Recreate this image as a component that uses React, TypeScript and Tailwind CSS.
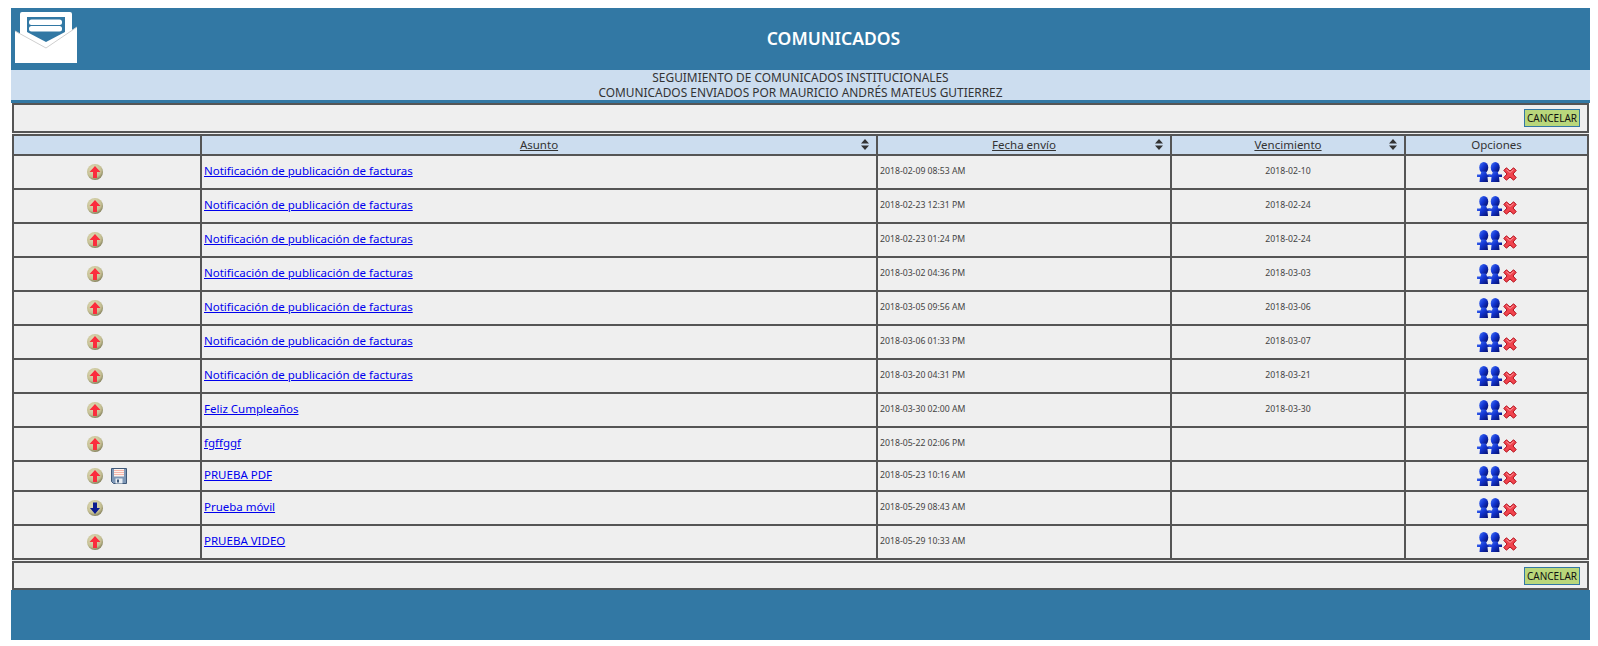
import React from "react";

const Orb = ({ down = false }: { down?: boolean }) => (
  <svg width="16" height="16" viewBox="0 0 16 16" className="block">
    <defs>
      <radialGradient id={down ? "orbd" : "orbu"} cx="0.42" cy="0.35" r="0.72">
        <stop offset="0" stopColor="#e6e2bf" />
        <stop offset="0.65" stopColor="#c4bf93" />
        <stop offset="1" stopColor="#6f6b48" />
      </radialGradient>
    </defs>
    <circle cx="8" cy="8" r="8" fill={`url(#${down ? "orbd" : "orbu"})`} />
    {down ? (
      <path d="M6 2.500h4V8h3L8 14 3 8h3z" fill="#0a1a90" />
    ) : (
      <path d="M8 2l5.500 6H10v6H6V8H2.500z" fill="#fb2d3d" />
    )}
  </svg>
);

const Floppy = () => (
  <svg width="16" height="16" viewBox="0 0 16 16" className="block">
    <path d="M0.500 0.500h15v15h-13l-2-2z" fill="#7e97b6" stroke="#3f5878" />
    <rect x="3" y="1" width="10" height="7.500" fill="#fdf2ec" />
    <path d="M3 2.500h10M3 4.500h10M3 6.500h10" stroke="#f6b6ab" strokeWidth="1" />
    <rect x="4.500" y="10.500" width="7" height="5" fill="#e8edf3" />
    <rect x="6" y="11.500" width="2" height="3" fill="#3f5878" />
  </svg>
);

const Person = ({ x, id }: { x: number; id: string }) => (
  <g transform={`translate(${x} 0)`}>
    <ellipse cx="6.750" cy="5.500" rx="4.500" ry="5.500" fill={`url(#${id})`} />
    <path
      d="M4.500 9.500h4.500l1 3h3.500v2.500h-3l.5 5H2.500l.5-5H0v-2.500h3.500z"
      fill={`url(#${id})`}
    />
  </g>
);

const Users = ({ id }: { id: string }) => (
  <svg width="25" height="20" viewBox="0 0 25 20" className="block">
    <defs>
      <linearGradient id={id} x1="0" y1="0" x2="0.9" y2="0.8">
        <stop offset="0" stopColor="#4a78f5" />
        <stop offset="0.5" stopColor="#1438d6" />
        <stop offset="1" stopColor="#07147a" />
      </linearGradient>
    </defs>
    <Person x={0} id={id} />
    <Person x={11.5} id={id} />
  </svg>
);

const RedX = () => (
  <svg width="14" height="14" viewBox="0 0 14 14" className="block translate-y-[2px] ml-px">
    <path
      d="M3.400.8L7 4 10.600.8 13.200 3.400 10 7l3.200 3.600-2.600 2.600L7 10l-3.600 3.200L.8 10.600 4 7 .8 3.400z"
      fill="#f0444e"
      stroke="#b3101b"
      strokeWidth="1"
    />
    <path d="M3.500 2.500L7 5.500l3.500-3" fill="none" stroke="#fa9a9f" strokeWidth="1" />
  </svg>
);

const Sort = () => (
  <svg width="8" height="11" viewBox="0 0 8 11" className="block">
    <path d="M4 0l4 4.500H0zM4 11L0 6.500h8z" fill="#333" />
  </svg>
);

const Envelope = () => (
  <svg width="62" height="51" viewBox="0 0 62 51" className="block">
    <path d="M5 2a2 2 0 012-2h48a2 2 0 012 2v16l5-3V51H0V19l5 3z" fill="#fff" />
    <path d="M0 19L31 36 62 15" fill="none" stroke="#cfcfcf" strokeWidth="1" />
    <path d="M12 5H50V20L31 30 12 20z" fill="#3278a4" />
    <rect x="14" y="7.500" width="33" height="5.500" rx="2.500" fill="#fff" />
    <rect x="14" y="14" width="33" height="5.500" rx="2.500" fill="#fff" />
  </svg>
);

type Row = { subject: string; sent: string; due: string; h: string; floppy?: boolean; down?: boolean };

const n = "Notificación de publicación de facturas";
const rows: Row[] = [
  { subject: n, sent: "2018-02-09 08:53 AM", due: "2018-02-10", h: "h-[34px]" },
  { subject: n, sent: "2018-02-23 12:31 PM", due: "2018-02-24", h: "h-[34px]" },
  { subject: n, sent: "2018-02-23 01:24 PM", due: "2018-02-24", h: "h-[34px]" },
  { subject: n, sent: "2018-03-02 04:36 PM", due: "2018-03-03", h: "h-[34px]" },
  { subject: n, sent: "2018-03-05 09:56 AM", due: "2018-03-06", h: "h-[34px]" },
  { subject: n, sent: "2018-03-06 01:33 PM", due: "2018-03-07", h: "h-[34px]" },
  { subject: n, sent: "2018-03-20 04:31 PM", due: "2018-03-21", h: "h-[34px]" },
  { subject: "Feliz Cumpleaños", sent: "2018-03-30 02:00 AM", due: "2018-03-30", h: "h-[34px]" },
  { subject: "fgffggf", sent: "2018-05-22 02:06 PM", due: "", h: "h-[34px]" },
  { subject: "PRUEBA PDF", sent: "2018-05-23 10:16 AM", due: "", h: "h-[30px]", floppy: true },
  { subject: "Prueba móvil", sent: "2018-05-29 08:43 AM", due: "", h: "h-[34px]", down: true },
  { subject: "PRUEBA VIDEO", sent: "2018-05-29 10:33 AM", due: "", h: "h-[34px]" },
];

const Cancel = () => (
  <button className="h-[18px] w-[56px] bg-[#b9d77b] border border-[#3278a4] text-[10px] leading-[14px] text-[#111]">
    CANCELAR
  </button>
);

const th = "border-2 border-[#555] bg-[#ccddef] font-normal text-[11.500px] text-[#333] p-0 h-[20px]";
const td = "border-2 border-[#555] p-0";

export default function App() {
  return (
    <div className="bg-white h-[646px] pt-2 pl-[11px] font-['Noto_Sans','Open_Sans',sans-serif]">
      <div className="w-[1579px]">
        <div className="h-[62px] bg-[#3278a4] flex items-start pl-[4px] pt-[4px]">
          <Envelope />
          <div className="flex-1 text-center text-white font-semibold text-[17.500px] leading-[24px] pt-[14px]">COMUNICADOS</div>
        </div>
        <div className="h-[30px] bg-[#ccddef] text-center text-[11.900px] leading-[15px] text-[#333]">
          <div>SEGUIMIENTO DE COMUNICADOS INSTITUCIONALES</div>
          <div>COMUNICADOS ENVIADOS POR MAURICIO ANDRÉS MATEUS GUTIERREZ</div>
        </div>
        <div className="h-[3px] bg-[#3278a4]" />
        <div className="w-[1577px] ml-px bg-[#efefef]">
          <div className="h-[30px] border-2 border-[#555] flex items-center justify-end pr-[7px]">
            <Cancel />
          </div>
          <table className="w-full table-fixed border-collapse mt-px">
            <colgroup>
              <col className="w-[188px]" />
              <col className="w-[676px]" />
              <col className="w-[294px]" />
              <col className="w-[234px]" />
              <col />
            </colgroup>
            <thead>
              <tr>
                <th className={th} />
                {["Asunto", "Fecha envío", "Vencimiento"].map((t) => (
                  <th key={t} className={th}>
                    <div className="relative flex justify-center">
                      <span className="underline">{t}</span>
                      <span className="absolute right-[7px] top-[3px]">
                        <Sort />
                      </span>
                    </div>
                  </th>
                ))}
                <th className={th}>Opciones</th>
              </tr>
            </thead>
            <tbody>
              {rows.map((r, i) => (
                <tr key={i} className={r.h}>
                  <td className={td}>
                    <div className="flex items-center justify-center gap-2">
                      <Orb down={r.down} />
                      <span className="w-4 h-4">{r.floppy && <Floppy />}</span>
                    </div>
                  </td>
                  <td className={`${td} pl-[2px] pb-[2px] text-[11.500px]`}>
                    <a href="#" className="text-[#0000ee] underline">
                      {r.subject}
                    </a>
                  </td>
                  <td className={`${td} pl-[2px] text-[8.700px] text-[#444]`}>{r.sent}</td>
                  <td className={`${td} text-center text-[8.700px] text-[#444]`}>{r.due}</td>
                  <td className={td}>
                    <div className="flex items-center justify-center">
                      <Users id={`u${i}`} />
                      <RedX />
                    </div>
                  </td>
                </tr>
              ))}
            </tbody>
          </table>
          <div className="h-[29px] mt-px border-2 border-[#555] flex items-center justify-end pr-[7px]">
            <Cancel />
          </div>
        </div>
        <div className="h-[50px] bg-[#3278a4]" />
      </div>
    </div>
  );
}
